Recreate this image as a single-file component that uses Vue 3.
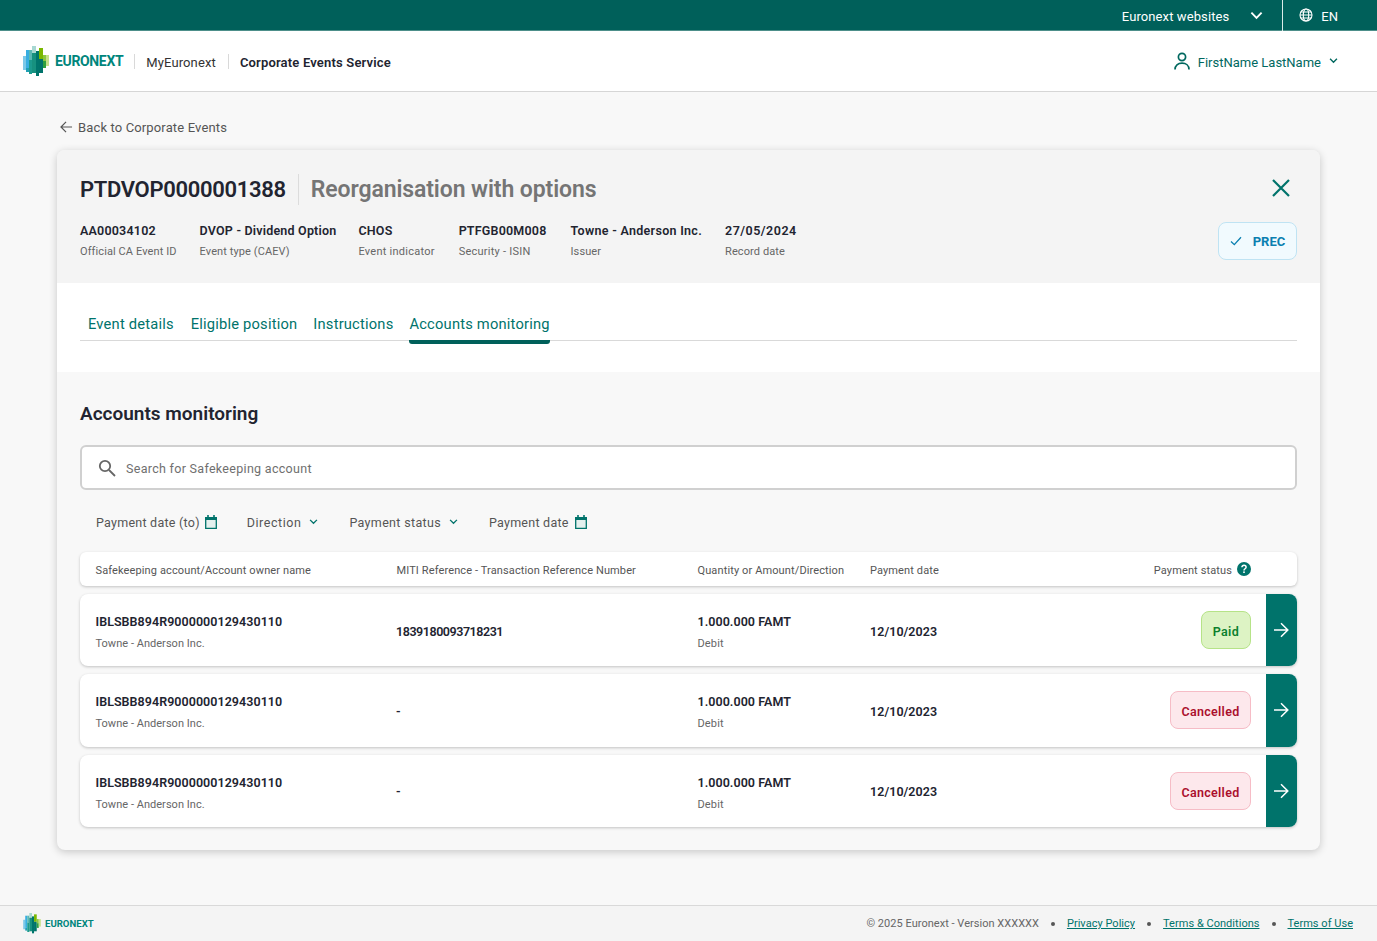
<script setup>
const tabs = ['Event details', 'Eligible position', 'Instructions', 'Accounts monitoring']
const meta = [
  { v: 'AA00034102', l: 'Official CA Event ID' },
  { v: 'DVOP - Dividend Option', l: 'Event type (CAEV)' },
  { v: 'CHOS', l: 'Event indicator' },
  { v: 'PTFGB00M008', l: 'Security - ISIN' },
  { v: 'Towne - Anderson Inc.', l: 'Issuer' },
  { v: '27/05/2024', l: 'Record date' },
]
const rows = [
  { ref: '1839180093718231', status: 'Paid', cls: 'paid' },
  { ref: '-', status: 'Cancelled', cls: 'cancelled' },
  { ref: '-', status: 'Cancelled', cls: 'cancelled' },
]
const logoCells = [
  [0,10,3,14,'#7cc8e8'],[3,4,3,18,'#38aee0'],[3,22,3,4,'#1f9fb5'],[6,4,3,10,'#5bb8b4'],[6,14,3,14,'#1b9a8d'],
  [9,0,4,7,'#a8d8d2'],[9,7,4,20,'#17917f'],[13,5,3,25,'#00756c'],[16,2,4,11,'#7ab800'],[16,13,4,14,'#00736b'],
  [20,9,3,6,'#8cc63f'],[20,15,3,7,'#2fa040'],[23,9,3,11,'#c5e08a']
]
</script>

<template>
  <div class="page">
    <div class="topbar">
      <span class="sites">Euronext websites</span>
      <svg class="chev-w" viewBox="0 0 14 9" width="13" height="9"><path d="M1.5 1.5 7 7l5.5-5.5" fill="none" stroke="#fff" stroke-width="2"/></svg>
      <span class="topdiv"></span>
      <svg viewBox="0 0 14 14" width="14" height="14" fill="none" stroke="#fff" stroke-width="1.1"><circle cx="7" cy="7" r="6"/><ellipse cx="7" cy="7" rx="2.7" ry="6"/><path d="M1 7h12M1.8 4h10.4M1.8 10h10.4"/></svg>
      <span class="lang">EN</span>
    </div>

    <header class="header">
      <div class="logo">
        <svg viewBox="0 0 26 31" width="26" height="31"><rect v-for="(c, i) in logoCells" :key="i" :x="c[0]" :y="c[1]" :width="c[2]" :height="c[3]" :fill="c[4]"/></svg>
        <span class="logotext">EURONEXT</span>
      </div>
      <span class="hdiv first"></span>
      <span class="my">MyEuronext</span>
      <span class="hdiv second"></span>
      <span class="service">Corporate Events Service</span>
      <div class="user">
        <svg viewBox="0 0 16 18" width="16" height="18" fill="none" stroke="#00685f" stroke-width="1.7"><circle cx="8" cy="5" r="3.6"/><path d="M1 17.5c0-4 3-6.3 7-6.3s7 2.3 7 6.3"/></svg>
        <span class="uname">FirstName LastName</span>
        <svg viewBox="0 0 10 7" width="9" height="6"><path d="M1 1l4 4 4-4" fill="none" stroke="#00685f" stroke-width="1.6"/></svg>
      </div>
    </header>

    <main class="main">
      <a class="back">
        <svg viewBox="0 0 14 13" width="13" height="12" fill="none" stroke="#555" stroke-width="1.3"><path d="M13 6.5H1.5M6.5 1 1 6.5 6.5 12"/></svg>
        <span>Back to Corporate Events</span>
      </a>

      <section class="card">
        <div class="cardhead">
          <div class="headleft">
            <div class="titlerow">
              <h1>PTDVOP0000001388</h1>
              <span class="tdiv"></span>
              <h2>Reorganisation with options</h2>
            </div>
            <div class="meta">
              <div v-for="m in meta" :key="m.l" class="metaitem">
                <strong>{{ m.v }}</strong>
                <span>{{ m.l }}</span>
              </div>
            </div>
          </div>
          <div class="headright">
            <svg class="close" viewBox="0 0 18 18" width="18" height="18"><path d="M1 1l16 16M17 1 1 17" stroke="#00736b" stroke-width="2.2" fill="none"/></svg>
            <div class="prec">
              <svg viewBox="0 0 12 10" width="12" height="10"><path d="M1 5.5 4.3 8.6 11 1.2" fill="none" stroke="#0a7fb0" stroke-width="1.3"/></svg>
              <span>PREC</span>
            </div>
          </div>
        </div>

        <div class="tabswrap">
          <nav class="tabs">
            <a v-for="(t, i) in tabs" :key="t" class="tab" :class="{ active: i === 3 }">{{ t }}</a>
          </nav>
        </div>

        <div class="content">
          <h3>Accounts monitoring</h3>
          <div class="search">
            <svg viewBox="0 0 18 18" width="18" height="18" fill="none" stroke="#666" stroke-width="1.8"><circle cx="7" cy="7" r="5.2"/><path d="m11 11 6 6"/></svg>
            <span class="placeholder">Search for Safekeeping account</span>
          </div>

          <div class="filters">
            <div class="filter f1"><span>Payment date (to)</span>
              <svg viewBox="0 0 12 14" width="12" height="14"><path d="M.7 2.7h10.6v10.6H.7z" fill="#e4f0ee" stroke="#00736b" stroke-width="1.3"/><path d="M0 2h12v3H0zM2.2 0h1.6v3H2.2zM8.2 0h1.6v3H8.2z" fill="#00736b"/></svg>
            </div>
            <div class="filter f2"><span>Direction</span>
              <svg viewBox="0 0 10 7" width="9" height="6"><path d="M1 1l4 4 4-4" fill="none" stroke="#00736b" stroke-width="1.5"/></svg>
            </div>
            <div class="filter f3"><span>Payment status</span>
              <svg viewBox="0 0 10 7" width="9" height="6"><path d="M1 1l4 4 4-4" fill="none" stroke="#00736b" stroke-width="1.5"/></svg>
            </div>
            <div class="filter f4"><span>Payment date</span>
              <svg viewBox="0 0 12 14" width="12" height="14"><path d="M.7 2.7h10.6v10.6H.7z" fill="#e4f0ee" stroke="#00736b" stroke-width="1.3"/><path d="M0 2h12v3H0zM2.2 0h1.6v3H2.2zM8.2 0h1.6v3H8.2z" fill="#00736b"/></svg>
            </div>
          </div>

          <div class="thead grid">
            <span>Safekeeping account/Account owner name</span>
            <span>MITI Reference - Transaction Reference Number</span>
            <span>Quantity or Amount/Direction</span>
            <span>Payment date</span>
            <span class="statushead"><span>Payment status</span>
              <svg viewBox="0 0 14 14" width="14" height="14"><circle cx="7" cy="7" r="7" fill="#00736b"/><path d="M4.9 5.3C4.9 4.1 5.8 3.3 7 3.3s2.1.8 2.1 1.9c0 1.5-2.1 1.6-2.1 3.2" fill="none" stroke="#fff" stroke-width="1.5"/><rect x="6.2" y="9.4" width="1.6" height="1.6" fill="#fff"/></svg>
            </span>
          </div>

          <div class="rows">
            <div v-for="(r, i) in rows" :key="i" class="row">
              <div class="grid rowgrid">
                <div class="cell"><strong>IBLSBB894R9000000129430110</strong><small>Towne - Anderson Inc.</small></div>
                <div class="single ref">{{ r.ref }}</div>
                <div class="cell"><strong>1.000.000 FAMT</strong><small>Debit</small></div>
                <div class="single">12/10/2023</div>
                <div class="statuscell"><span class="badge" :class="r.cls">{{ r.status }}</span></div>
              </div>
              <div class="go">
                <svg viewBox="0 0 16 16" width="16" height="16" fill="none" stroke="#fff" stroke-width="1.5"><path d="M1 8h13.5M8 1.2 14.8 8 8 14.8"/></svg>
              </div>
            </div>
          </div>
        </div>
      </section>
    </main>

    <footer class="footer">
      <div class="flogo">
        <svg viewBox="0 0 26 31" width="18" height="21"><rect v-for="(c, i) in logoCells" :key="i" :x="c[0]" :y="c[1]" :width="c[2]" :height="c[3]" :fill="c[4]"/></svg>
        <span>EURONEXT</span>
      </div>
      <div class="flinks">
        <span>© 2025 Euronext - Version XXXXXX</span><i></i>
        <a>Privacy Policy</a><i></i>
        <a>Terms &amp; Conditions</a><i></i>
        <a>Terms of Use</a>
      </div>
    </footer>
  </div>
</template>

<style>
html, body { margin: 0; background: #f8f8f8; }
</style>

<style scoped>
.page { height: 941px; overflow: hidden; display: flex; flex-direction: column; font-family: Roboto, "Liberation Sans", sans-serif; color: #222430; background: #f8f8f8; }
.topbar { height: 30px; background: #00605a; border-bottom: 1px solid #4d8f8a; display: flex; align-items: center; justify-content: flex-end; color: #fff; font-size: 13px; flex: none; }
.sites { letter-spacing: .1px; margin-right: 21px; padding-top: 2px; }
.topdiv { width: 1px; height: 31px; background: #dcebe9; margin: 0 16px 0 19px; }
.lang { margin: 0 39px 0 8px; font-size: 13px; padding-top: 2px; }
.header { height: 60px; background: #fff; border-bottom: 1px solid #d6d6d6; display: flex; align-items: center; padding: 0 39px 0 23px; flex: none; }
.logo { display: flex; align-items: center; }
.logotext { font-size: 14px; font-weight: 700; color: #00857c; margin-left: 6px; letter-spacing: -.35px; }
.hdiv { width: 1px; height: 15px; background: #d9d9d9; }
.hdiv.first { margin: 0 11px 0 11px; }
.hdiv.second { margin: 0 11px 0 12px; }
.my { font-size: 13px; color: #333; letter-spacing: .12px; padding-top: 2px; }
.service { font-size: 13px; font-weight: 600; letter-spacing: .18px; padding-top: 2px; }
.user { margin-left: auto; display: flex; align-items: center; gap: 8px; font-size: 13px; color: #00685f; }
.uname { padding-top: 2px; }
.main { flex: 1; padding: 0 57px; min-height: 0; }
.back { display: flex; align-items: center; gap: 5px; height: 16px; margin-top: 27px; font-size: 13px; color: #555; letter-spacing: .14px; padding-left: 3px; }
.card { margin-top: 15px; height: 700px; border-radius: 8px; box-shadow: 0 2px 8px rgba(0,0,0,.2); overflow: hidden; background: #f8f8f8; }
.cardhead { height: 133px; box-sizing: border-box; background: #f4f4f4; padding: 23px 23px 0; display: flex; justify-content: space-between; }
.titlerow { display: flex; align-items: center; height: 32px; }
h1 { margin: 0; padding-top: 2px; font-size: 22px; font-weight: 600; line-height: 32px; letter-spacing: -.32px; }
.tdiv { width: 1px; height: 31px; background: #dcdcdc; margin: 0 12px; }
h2 { margin: 0; padding-top: 2px; font-size: 23px; font-weight: 600; line-height: 32px; color: #757575; letter-spacing: -.1px; }
.meta { display: flex; gap: 23px; margin-top: 18px; }
.metaitem { display: flex; flex-direction: column; }
.metaitem:nth-child(3) { margin-left: -1px; }
.metaitem:nth-child(4) { margin-left: 1px; }
.metaitem:nth-child(5) { margin-left: 1px; }
.metaitem strong { font-size: 12.5px; font-weight: 600; line-height: 16px; letter-spacing: .2px; }
.metaitem:nth-child(5) strong { letter-spacing: .3px; }
.metaitem:nth-child(6) strong { letter-spacing: .5px; }
.metaitem span { font-size: 11px; line-height: 14px; margin-top: 6px; color: #666; letter-spacing: .1px; }
.metaitem:nth-child(3) span, .metaitem:nth-child(4) span { letter-spacing: .25px; }
.headright { display: flex; flex-direction: column; align-items: flex-end; }
.close { margin: 6px 7px 0 0; }
.prec { margin-top: 25px; width: 79px; height: 38px; box-sizing: border-box; border: 1px solid #bfe3f3; border-radius: 8px; background: #f1fafe; display: flex; align-items: center; justify-content: center; gap: 11px; color: #0a7fb0; font-size: 13px; font-weight: 700; }
.tabswrap { height: 89px; background: #fff; padding: 0 23px; box-sizing: border-box; }
.tabs { display: flex; gap: 17px; height: 58px; border-bottom: 1px solid #d9d9d9; padding-left: 8px; box-sizing: border-box; align-items: flex-end; }
.tab { font-size: 14.7px; color: #00736b; height: 37px; box-sizing: border-box; padding-top: 8px; line-height: 26px; letter-spacing: .2px; position: relative; }
.tab:nth-child(n+3) { margin-left: -1px; }
.tab.active::after { content: ''; position: absolute; left: 0; right: 0; bottom: -4px; height: 4px; background: #00605a; border-radius: 0 0 3px 3px; }
.content { padding: 30px 23px 0; }
h3 { margin: 0; font-size: 19px; font-weight: 600; line-height: 24px; }
.search { margin-top: 19px; height: 45px; box-sizing: border-box; border: 2px solid #d0d0d0; border-radius: 6px; background: #fff; display: flex; align-items: center; gap: 10px; padding-left: 16px; font-size: 12.5px; color: #6f6f6f; letter-spacing: .3px; }
.placeholder { padding-top: 2px; }
.filters { display: flex; height: 18px; margin-top: 23px; padding-left: 16px; align-items: center; font-size: 12.5px; color: #555; letter-spacing: .25px; }
.filter { display: flex; align-items: center; gap: 5px; }
.f1 { margin-right: 30px; }
.f2 { gap: 8px; margin-right: 31px; letter-spacing: .55px; }
.f3 { gap: 8px; margin-right: 31px; letter-spacing: .33px; }
.f4 { gap: 6px; }
.grid { display: grid; grid-template-columns: 301px 301px 172.5px 1fr auto; align-items: center; }
.thead { margin-top: 21px; height: 34px; padding: 0 46px 0 15.5px; background: #fff; border-radius: 6px; box-shadow: 0 1px 3px rgba(0,0,0,.22); font-size: 11px; color: #555; letter-spacing: .12px; box-sizing: border-box; }
.thead > span { padding-top: 2px; }
.thead > .statushead { display: flex; align-items: center; gap: 5px; padding-top: 0; }
.statushead > span { padding-top: 2px; }
.rows { display: flex; flex-direction: column; gap: 8px; margin-top: 8px; }
.row { height: 72.33px; display: flex; background: #fff; border-radius: 8px; overflow: hidden; box-shadow: 0 1px 3px rgba(0,0,0,.22); }
.rowgrid { flex: 1; padding: 5px 15px 0 15.5px; }
.cell { display: flex; flex-direction: column; }
.cell strong, .single { font-size: 12.5px; font-weight: 600; letter-spacing: .05px; }
.single { margin-top: -3px; }
.ref { letter-spacing: -.45px; margin-left: -.5px; }
.cell strong { line-height: 16px; }
.cell small { font-size: 11px; line-height: 14px; margin-top: 7px; color: #666; letter-spacing: .03px; }
.cell:nth-child(3) small { letter-spacing: .15px; }
.statuscell { margin-top: -5px; }
.badge { display: inline-block; height: 38px; line-height: 39px; box-sizing: border-box; padding: 0 10.5px; border-radius: 8px; font-size: 12.5px; font-weight: 600; border: 1px solid; letter-spacing: .3px; }
.paid { background: #ddf3c4; border-color: #b6e388; color: #0c7f2e; padding: 0 11px; }
.cancelled { background: #fde8ec; border-color: #f6bcc6; color: #ab0f2d; }
.go { width: 31px; box-sizing: border-box; padding-right: 2px; background: #00736b; display: flex; align-items: center; justify-content: center; }
.footer { height: 36px; border-top: 1px solid #d9d9d9; background: #f4f4f4; display: flex; align-items: center; justify-content: space-between; padding: 0 24px 0 23px; flex: none; box-sizing: border-box; }
.flogo { display: flex; align-items: center; gap: 4px; font-size: 9.6px; font-weight: 700; color: #00857c; }
.flinks { display: flex; align-items: center; font-size: 11px; color: #666; letter-spacing: .03px; }
.flinks a { color: #00736b; text-decoration: underline; }
.flinks i { width: 4px; height: 4px; border-radius: 50%; background: #555; margin: 0 12px; }
</style>
